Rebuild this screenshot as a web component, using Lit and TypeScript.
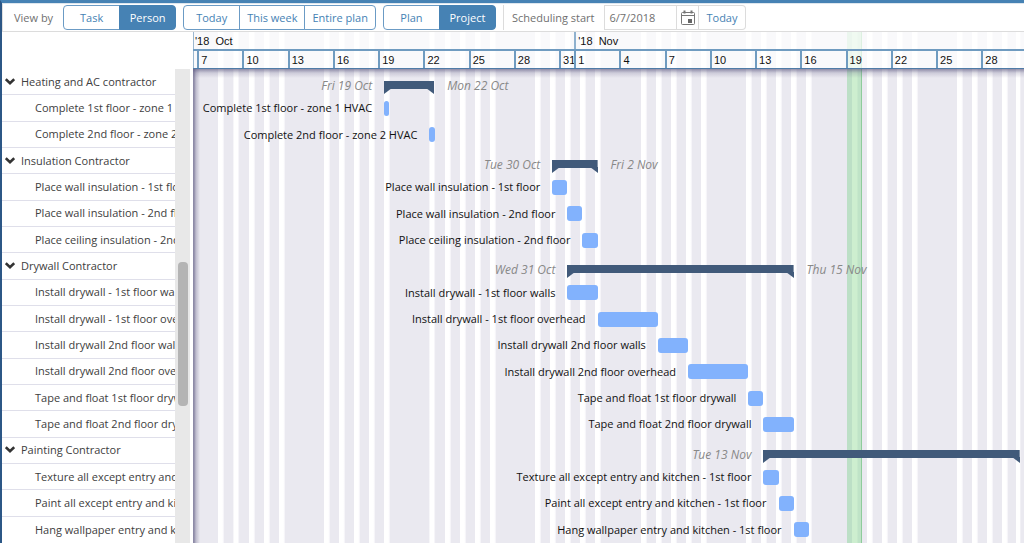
import { LitElement, html, css, svg } from "lit";
import { customElement, property, state } from "lit/decorators.js";
import { classMap } from "lit/directives/class-map.js";

/* Days are counted from 0 Oct: 32 is 1 Nov. */
const RANGE_START = 6.65;
const RANGE_END = 61.76;
const SPAN = RANGE_END - RANGE_START;
const TODAY = 50;
const NOVEMBER = 32;
/* Scale lines straddle midnight, so each cell begins a little before it. */
const LINE_LEAD = 0.07;

const pct = (days: number) => `${((days / SPAN) * 100).toFixed(3)}%`;

interface Task {
  name: string;
  start: number;
  end: number;
}
interface Group {
  name: string;
  start: number;
  end: number;
  from: string;
  to: string;
  tasks: Task[];
}

const GROUPS: Group[] = [
  {
    name: "Heating and AC contractor", start: 19.33, end: 22.65, from: "Fri 19 Oct", to: "Mon 22 Oct",
    tasks: [
      { name: "Complete 1st floor - zone 1 HVAC", start: 19.33, end: 19.67 },
      { name: "Complete 2nd floor - zone 2 HVAC", start: 22.33, end: 22.67 },
    ],
  },
  {
    name: "Insulation Contractor", start: 30.48, end: 33.48, from: "Tue 30 Oct", to: "Fri 2 Nov",
    tasks: [
      { name: "Place wall insulation - 1st floor", start: 30.48, end: 31.48 },
      { name: "Place wall insulation - 2nd floor", start: 31.48, end: 32.48 },
      { name: "Place ceiling insulation - 2nd floor", start: 32.48, end: 33.48 },
    ],
  },
  {
    name: "Drywall Contractor", start: 31.48, end: 46.48, from: "Wed 31 Oct", to: "Thu 15 Nov",
    tasks: [
      { name: "Install drywall - 1st floor walls", start: 31.48, end: 33.48 },
      { name: "Install drywall - 1st floor overhead", start: 33.48, end: 37.48 },
      { name: "Install drywall 2nd floor walls", start: 37.48, end: 39.48 },
      { name: "Install drywall 2nd floor overhead", start: 39.48, end: 43.48 },
      { name: "Tape and float 1st floor drywall", start: 43.48, end: 44.48 },
      { name: "Tape and float 2nd floor drywall", start: 44.48, end: 46.48 },
    ],
  },
  {
    name: "Painting Contractor", start: 44.48, end: 61.48, from: "Tue 13 Nov", to: "",
    tasks: [
      { name: "Texture all except entry and kitchen - 1st floor", start: 44.48, end: 45.48 },
      { name: "Paint all except entry and kitchen - 1st floor", start: 45.48, end: 46.48 },
      { name: "Hang wallpaper entry and kitchen - 1st floor", start: 46.48, end: 47.48 },
    ],
  },
];

@customElement("plan-toolbar")
export class PlanToolbar extends LitElement {
  @state() private view = "Person";
  @state() private scope = "Project";

  static styles = css`
    :host {
      display: flex;
      align-items: center;
      height: 27px;
      padding-left: 11px;
      border-top: 1px solid #dde6ee;
      border-left: 1px solid #e0e0e0;
      border-bottom: 1px solid #dcdcdc;
      background: #fff;
      color: #707070;
      white-space: nowrap;
      overflow: hidden;
    }
    button,
    input {
      font: inherit;
      margin: 0;
      box-sizing: border-box;
      height: 25px;
    }
    .group {
      display: flex;
      margin-right: 7px;
    }
    .caption {
      margin-right: 10px;
    }
    .button {
      min-width: 57px;
      padding: 0 7px;
      border: 1px solid #6b9bc5;
      background: #fff;
      color: #4682b4;
      cursor: pointer;
    }
    .button + .button {
      margin-left: -1px;
    }
    .button:first-child {
      border-radius: 4px 0 0 4px;
    }
    .button:last-child {
      border-radius: 0 4px 4px 0;
    }
    .button.on {
      background: #4682b4;
      border-color: #4682b4;
      color: #fff;
    }
    .start {
      display: flex;
      align-items: center;
      height: 25px;
      border-left: 1px solid #dcdcdc;
      padding-left: 8px;
    }
    .date {
      width: 73px;
      padding: 0 4px;
      border: 1px solid #dcdcdc;
      color: #707070;
      border-radius: 0;
    }
    .plain {
      border: 1px solid #dcdcdc;
      border-left: 0;
      background: #fff;
      color: #4682b4;
      cursor: pointer;
      padding: 0 7px;
    }
    .plain:last-child {
      border-radius: 0 4px 4px 0;
    }
    .calendar {
      display: flex;
      align-items: center;
      justify-content: center;
      width: 22px;
      padding: 0;
    }
  `;

  private toggle(label: string, on: boolean, pick: () => void) {
    return html`<button class=${classMap({ button: true, on })} aria-pressed=${on ? "true" : "false"} @click=${pick}>${label}</button>`;
  }

  render() {
    return html`
      <span class="caption">View by</span>
      <div class="group" role="group" aria-label="View by">
        ${["Task", "Person"].map((v) => this.toggle(v, this.view === v, () => (this.view = v)))}
      </div>
      <div class="group" role="group" aria-label="Zoom">
        <button class="button">Today</button><button class="button">This week</button><button class="button">Entire plan</button>
      </div>
      <div class="group" role="group" aria-label="Scope">
        ${["Plan", "Project"].map((v) => this.toggle(v, this.scope === v, () => (this.scope = v)))}
      </div>
      <div class="start">
        <label class="caption" for="start">Scheduling start</label>
        <input id="start" class="date" type="text" value="6/7/2018" />
        <button class="plain calendar" aria-label="Pick a date">
          <svg width="14" height="15" viewBox="0 0 14 15" fill="none" stroke="#777">
            <rect x="0.5" y="2.5" width="13" height="12" rx="1"></rect>
            <path d="M0.5 5.5H13.5"></path>
            <path d="M3.5 0.5V3.5M10.5 0.5V3.5" stroke-width="2"></path>
            <rect x="7" y="9" width="4" height="4" fill="#666" stroke="none"></rect>
          </svg>
        </button>
        <button class="plain">Today</button>
      </div>
    `;
  }
}

@customElement("resource-list")
export class ResourceList extends LitElement {
  static styles = css`
    :host {
      display: grid;
      grid-template-columns: minmax(0, 1fr) 15px;
      grid-template-rows: 37px minmax(0, 1fr);
      background: #fff;
      color: #404040;
    }
    .rows {
      grid-area: 2 / 1;
      display: grid;
      grid-auto-rows: minmax(26px, 1fr);
      margin: 0;
      padding: 0;
      list-style: none;
      overflow: hidden;
    }
    .row {
      display: flex;
      align-items: center;
      box-sizing: border-box;
      border-bottom: 1px solid #dfdfea;
      padding-left: 33px;
      white-space: nowrap;
      overflow: hidden;
    }
    .row:last-child {
      border-bottom: 0;
    }
    .head {
      padding-left: 3px;
    }
    .twist {
      display: flex;
      padding: 0;
      margin-right: 6px;
      border: 0;
      background: none;
      cursor: pointer;
    }
    .track {
      grid-area: 2 / 2;
      display: grid;
      grid-template-rows: 193fr 145fr 137fr;
      background: #e8e8e8;
      padding: 0 2px 0 3px;
    }
    .thumb {
      grid-row: 2;
      border-radius: 4px;
      background: #b4b4b4;
    }
  `;

  render() {
    return html`
      <ul class="rows">
        ${GROUPS.map(
          (g) => html`
            <li class="row head">
              <button class="twist" aria-label="Collapse ${g.name}" aria-expanded="true">
                <svg width="10" height="8" viewBox="0 0 10 8" fill="none" stroke="#333" stroke-width="2.6">
                  <path d="M0.8 1.2L5 5.2L9.2 1.2"></path>
                </svg>
              </button>
              <span>${g.name}</span>
            </li>
            ${g.tasks.map((t) => html`<li class="row">${t.name}</li>`)}
          `
        )}
      </ul>
      <div class="track"><div class="thumb"></div></div>
    `;
  }
}

@customElement("plan-chart")
export class PlanChart extends LitElement {
  @property({ type: Number }) today = TODAY;

  static styles = css`
    :host {
      display: grid;
      grid-template: 37px minmax(0, 1fr) / minmax(0, 1fr);
      overflow: hidden;
      color: #111;
    }
    .days {
      grid-area: 1 / 1 / 3 / 2;
      display: flex;
    }
    .day {
      flex: none;
      background: #eae9f0;
    }
    .work {
      background: linear-gradient(to right, #eae9f0 32%, #fff 36%, #fff 63%, #f6f5f9 65%, #f6f5f9 70%, #eae9f0 72%);
    }
    .today {
      background: linear-gradient(to right, #bcdfc6 32%, #cdeecf 36%, #cdeecf 68%, #bfe3c7 72%, #bfe3c7 91%, #8ecb9b 95%);
    }
    .scale {
      grid-area: 1 / 1;
      display: grid;
      grid-template-rows: 17px 20px;
      background: rgba(255, 255, 255, 0.7);
      box-shadow: inset 1px 0 #9bb7d0;
      font-family: "Liberation Sans", Arial, sans-serif;
      font-size: 11px;
      color: #111;
      white-space: pre;
    }
    .months,
    .ticks {
      display: flex;
      overflow: hidden;
      box-sizing: border-box;
    }
    .ticks {
      border-top: 2px solid #6f9bc0;
      border-bottom: 1px solid #4f7ca8;
    }
    .month,
    .tick {
      display: flex;
      flex: none;
      box-sizing: border-box;
      align-items: center;
      padding-left: 2px;
      overflow: hidden;
    }
    .tick {
      border-left: 2px solid #6f9bc0;
    }
    .edge {
      border-left: 0;
    }
    .month + .month {
      border-left: 2px solid #8fb1ce;
    }
    .rows {
      grid-area: 2 / 1;
      display: grid;
      grid-auto-rows: minmax(26px, 1fr);
      background: linear-gradient(to bottom, rgba(92, 88, 128, 0.65), rgba(92, 88, 128, 0.2) 4px, transparent 9px),
        linear-gradient(to right, rgba(92, 88, 128, 0.65) 1px, rgba(92, 88, 128, 0.3) 3px, transparent 7px);
    }
    .row {
      display: flex;
      align-items: center;
      white-space: nowrap;
      overflow: hidden;
    }
    .lead {
      flex: none;
      display: flex;
      justify-content: flex-end;
      box-sizing: border-box;
      padding-right: 12px;
    }
    .bar {
      flex: none;
      height: 15px;
      border-radius: 3px;
      background: #82b2fd;
    }
    .summary {
      align-items: flex-start;
      padding-top: 8px;
      font-size: 12px;
      font-style: italic;
      color: #888;
    }
    .bracket {
      display: flex;
      flex: none;
      margin-top: 4px;
      height: 13px;
      justify-content: space-between;
      background: linear-gradient(#415a7a, #415a7a) top / 100% 8px no-repeat;
    }
    .until {
      padding-left: 13px;
    }
  `;

  private scaleCells() {
    const starts: number[] = [];
    for (let d = 7; d < NOVEMBER; d += 3) starts.push(d);
    for (let d = NOVEMBER; d < RANGE_END; d += 3) starts.push(d);
    return html`
      <div class="tick edge" style="width:${pct(starts[0] - LINE_LEAD - RANGE_START)}"></div>
      ${starts.map((d, i) => {
        const next = i + 1 < starts.length ? starts[i + 1] - LINE_LEAD : RANGE_END;
        return html`<div class="tick" style="width:${pct(next - d + LINE_LEAD)}">${d < NOVEMBER ? d : d - 31}</div>`;
      })}
    `;
  }

  private dayCells() {
    const cells = [];
    for (let d = Math.floor(RANGE_START); d < RANGE_END; d++) {
      const from = Math.max(d, RANGE_START);
      const to = Math.min(d + 1, RANGE_END);
      const weekend = d % 7 === 6 || d % 7 === 0;
      const isToday = d === this.today;
      cells.push(html`<div class=${classMap({ day: true, work: !weekend && !isToday, today: isToday })} style="width:${pct(to - from)}"></div>`);
    }
    return cells;
  }

  private tip(points: string) {
    return html`<svg width="8" height="13" viewBox="0 0 8 13">${svg`<polygon points=${points} fill="#415a7a"></polygon>`}</svg>`;
  }

  render() {
    return html`
      <div class="days">${this.dayCells()}</div>
      <div class="scale">
        <div class="months">
          <div class="month" style="width:${pct(NOVEMBER - LINE_LEAD - RANGE_START)}">'18  Oct</div>
          <div class="month" style="width:${pct(RANGE_END - NOVEMBER + LINE_LEAD)}">'18  Nov</div>
        </div>
        <div class="ticks">${this.scaleCells()}</div>
      </div>
      <div class="rows">
        ${GROUPS.map(
          (g) => html`
            <div class="row summary">
              <div class="lead" style="width:${pct(g.start - RANGE_START)}">${g.from}</div>
              <div class="bracket" style="width:${pct(g.end - g.start)}">
                ${this.tip("0,7 8,7 0,13")}${this.tip("0,7 8,7 8,13")}
              </div>
              ${g.to ? html`<div class="until">${g.to}</div>` : ""}
            </div>
            ${g.tasks.map(
              (t) => html`
                <div class="row">
                  <div class="lead" style="width:${pct(t.start - RANGE_START)}">${t.name}</div>
                  <div class="bar" style="width:${pct(t.end - t.start)}"></div>
                </div>
              `
            )}
          `
        )}
      </div>
    `;
  }
}

@customElement("app-root")
export class AppRoot extends LitElement {
  static styles = css`
    :host {
      display: grid;
      grid-template: auto minmax(0, 1fr) / 188px minmax(0, 1fr);
      column-gap: 3px;
      box-sizing: border-box;
      min-height: 100vh;
      border-top: 3px solid #4682b4;
      border-left: 2px solid #2c5786;
      background: #fff;
      font-family: "Open Sans", "Noto Sans", sans-serif;
      font-size: 11px;
      line-height: 18px;
      overflow: hidden;
    }
    .toolbar {
      grid-column: 1 / -1;
    }
  `;

  render() {
    return html`
      <plan-toolbar class="toolbar"></plan-toolbar>
      <resource-list></resource-list>
      <plan-chart></plan-chart>
    `;
  }
}
